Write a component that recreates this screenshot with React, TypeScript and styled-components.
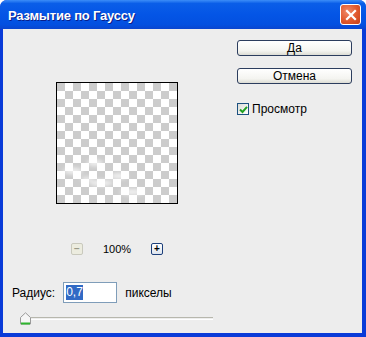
import styled, { createGlobalStyle } from "styled-components";

const GlobalStyle = createGlobalStyle`
  html, body {
    margin: 0;
    padding: 0;
    background: #ffffff;
  }
  body {
    font-family: "Liberation Sans", Arial, sans-serif;
  }
`;

export default function App() {
  return (
    <>
      <GlobalStyle />
      <St.Window>
        <St.TitleBar>
          <St.Title>Размытие по Гауссу</St.Title>
          <St.CloseButton aria-label="close">
            <svg width="12" height="12" viewBox="0 0 12 12">
              <path d="M2 2 L10 10 M10 2 L2 10" stroke="#fff" strokeWidth="2.2" strokeLinecap="square" />
            </svg>
          </St.CloseButton>
        </St.TitleBar>
        <St.Body>
          <St.TopRow>
            <St.PreviewColumn>
              <St.Preview>
                {/* faint blurred traces of the layer content */}
                <St.Smudge width="120" height="120" viewBox="0 0 120 120">
                  <defs>
                    <filter id="blur" x="-20%" y="-20%" width="140%" height="140%">
                      <feGaussianBlur stdDeviation="2" />
                    </filter>
                  </defs>
                  <g fill="#ffffff" opacity="0.75" filter="url(#blur)">
                    <ellipse cx="16" cy="88" rx="10" ry="3" />
                    <ellipse cx="38" cy="80" rx="8" ry="3" />
                    <ellipse cx="62" cy="93" rx="9" ry="3" />
                    <ellipse cx="44" cy="100" rx="12" ry="3" />
                    <ellipse cx="75" cy="109" rx="12" ry="3" />
                    <ellipse cx="30" cy="96" rx="6" ry="2" />
                  </g>
                </St.Smudge>
              </St.Preview>
              <St.ZoomRow>
                <St.ZoomButton disabled>−</St.ZoomButton>
                <St.ZoomLabel>100%</St.ZoomLabel>
                <St.ZoomButton>+</St.ZoomButton>
              </St.ZoomRow>
            </St.PreviewColumn>
            <St.ButtonColumn>
              <St.Button>Да</St.Button>
              <St.Button>Отмена</St.Button>
              <St.CheckRow>
                <St.CheckBox>
                  <svg width="9" height="9" viewBox="0 0 9 9">
                    <path d="M1 4.5 L3.5 7 L8 1.8" fill="none" stroke="#21a121" strokeWidth="2" />
                  </svg>
                </St.CheckBox>
                <span>Просмотр</span>
              </St.CheckRow>
            </St.ButtonColumn>
          </St.TopRow>
          <St.RadiusRow>
            <span>Радиус:</span>
            <St.Input>
              <St.Selected>0,7</St.Selected>
            </St.Input>
            <span>пикселы</span>
          </St.RadiusRow>
          <St.Slider>
            <St.Thumb>
              <svg width="11" height="13" viewBox="0 0 11 13">
                <path d="M0.5 12 V5.5 L5.5 0.8 L10.5 5.5 V12 Z" fill="#f6f6f6" stroke="#9a9a9a" />
                <path d="M1 11.5 H10" stroke="#2fb52f" strokeWidth="2" />
              </svg>
            </St.Thumb>
            <St.Track />
          </St.Slider>
        </St.Body>
      </St.Window>
    </>
  );
}

const St = {
  Window: styled.div`
    width: 366px;
    height: 337px;
    box-sizing: border-box;
    display: flex;
    flex-direction: column;
    background: #0a3bd8;
    border-radius: 7px 7px 0 0;
    overflow: hidden;
  `,
  TitleBar: styled.div`
    height: 29px;
    flex: none;
    display: flex;
    align-items: center;
    justify-content: space-between;
    padding: 0 5px 0 8px;
    background: linear-gradient(
      to bottom,
      #3c8df8 0%,
      #0a5ee8 12%,
      #0455e6 50%,
      #0350e0 85%,
      #0a45cf 100%
    );
  `,
  Title: styled.span`
    color: #ffffff;
    font-family: "Liberation Sans", Arial, sans-serif;
    font-weight: bold;
    font-size: 13px;
    letter-spacing: -0.2px;
    text-shadow: 1px 1px 0 #0a1e8a;
    margin-top: 1px;
  `,
  CloseButton: styled.div`
    width: 19px;
    height: 19px;
    display: flex;
    align-items: center;
    justify-content: center;
    border: 1px solid #ffffff;
    border-radius: 3px;
    background: radial-gradient(circle at 35% 35%, #f08a6a 0%, #e0582c 55%, #c5401a 100%);
  `,
  Body: styled.div`
    flex: 1;
    margin: 0 4px 4px 3px;
    background: #ededed;
    color: #000;
    font-size: 12px;
    display: flex;
    flex-direction: column;
  `,
  TopRow: styled.div`
    display: flex;
    justify-content: space-between;
    padding: 11px 10px 0 0;
  `,
  PreviewColumn: styled.div`
    display: flex;
    flex-direction: column;
    align-items: center;
    width: 122px;
    margin-left: 53px;
    padding-top: 42px;
  `,
  Preview: styled.div`
    position: relative;
    width: 120px;
    height: 120px;
    border: 1px solid #000;
    background-color: #ffffff;
    background-image:
      linear-gradient(45deg, #cccccc 25%, transparent 25%, transparent 75%, #cccccc 75%),
      linear-gradient(45deg, #cccccc 25%, transparent 25%, transparent 75%, #cccccc 75%);
    background-size: 16px 16px;
    background-position: 8px 0, 0 8px;
  `,
  Smudge: styled.svg`
    position: absolute;
    left: 0;
    top: 0;
  `,
  ZoomRow: styled.div`
    display: flex;
    align-items: center;
    justify-content: space-between;
    width: 92px;
    margin-top: 39px;
  `,
  ZoomButton: styled.div<{ disabled?: boolean }>`
    width: 10px;
    height: 10px;
    border: 1px solid ${({ disabled }) => (disabled ? "#c9c9bd" : "#1c3f7a")};
    border-radius: 2px;
    background: ${({ disabled }) => (disabled ? "#ececdf" : "linear-gradient(#ffffff, #dde4ee)")};
    color: ${({ disabled }) => (disabled ? "#9a9a8a" : "#000")};
    font-size: 10px;
    line-height: 9px;
    text-align: center;
    font-weight: bold;
  `,
  ZoomLabel: styled.span`
    font-size: 11px;
  `,
  ButtonColumn: styled.div`
    display: flex;
    flex-direction: column;
    width: 115px;
  `,
  Button: styled.div`
    height: 14px;
    border: 1px solid #2c3d5e;
    border-radius: 3px;
    background: linear-gradient(#ffffff 0%, #f4f4f0 70%, #dcdcd4 100%);
    font-size: 12px;
    line-height: 14px;
    text-align: center;
    margin-bottom: 12px;
  `,
  CheckRow: styled.div`
    display: flex;
    align-items: center;
    gap: 3px;
    margin-top: 6px;
    font-size: 12px;
  `,
  CheckBox: styled.div`
    width: 10px;
    height: 10px;
    border: 1px solid #1c5180;
    background: linear-gradient(135deg, #dcdcd7, #ffffff);
    display: flex;
    align-items: center;
    justify-content: center;
  `,
  RadiusRow: styled.div`
    display: flex;
    align-items: center;
    gap: 8px;
    margin-top: 27px;
    padding-left: 9px;
    font-size: 12px;
  `,
  Input: styled.div`
    width: 50px;
    height: 19px;
    border: 1px solid #7f9db9;
    background: #ffffff;
    display: flex;
    align-items: center;
    padding-left: 2px;
  `,
  Selected: styled.span`
    background: #316ac5;
    color: #ffffff;
    line-height: 15px;
  `,
  Slider: styled.div`
    display: flex;
    align-items: center;
    margin: 9px 0 0 17px;
    width: 193px;
  `,
  Thumb: styled.div`
    flex: none;
    height: 13px;
  `,
  Track: styled.div`
    flex: 1;
    height: 1px;
    border-top: 1px solid #b7b7ad;
    border-bottom: 1px solid #ffffff;
  `,
};
